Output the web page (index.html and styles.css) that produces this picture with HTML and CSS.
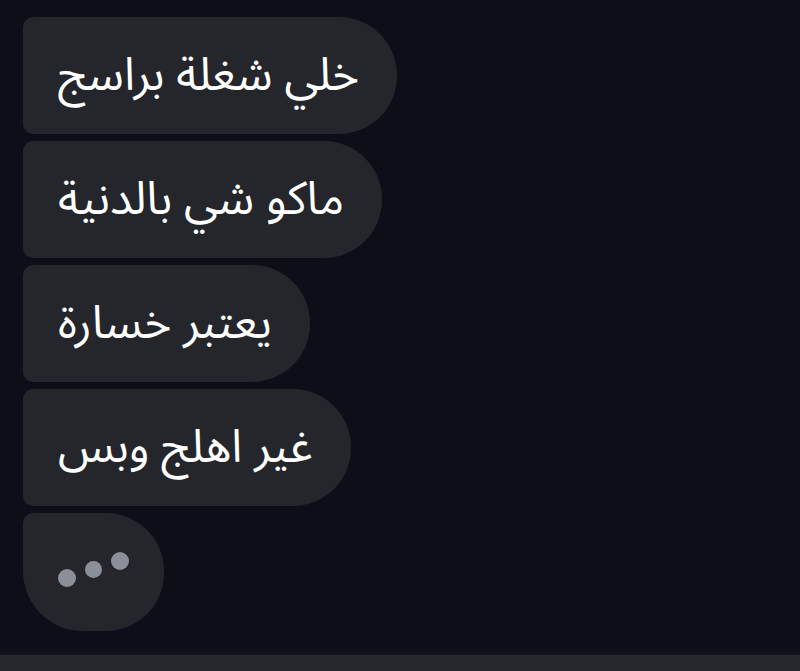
FILE: index.html
```html
<!DOCTYPE html>
<html lang="ar">
<head>
    <meta charset="UTF-8">
    <meta name="viewport" content="width=device-width, initial-scale=1.0">
    <title>المحادثة</title>
    <link rel="stylesheet" href="styles.css">
</head>
<body>
    <div class="chat">
        <!-- رسائل -->
        <div class="bubble" dir="rtl">خلي شغلة براسج</div>
        <div class="bubble" dir="rtl">ماكو شي بالدنية</div>
        <div class="bubble" dir="rtl">يعتبر خسارة</div>
        <div class="bubble" dir="rtl">غير اهلج وبس</div>

        <!-- يكتب الآن -->
        <div class="typing">
            <span class="dot dot1"></span>
            <span class="dot dot2"></span>
            <span class="dot dot3"></span>
        </div>
    </div>

    <div class="composer"></div>
</body>
</html>
```

FILE: styles.css
```css
/* Reset geral */
* {
    margin: 0;
    padding: 0;
    box-sizing: border-box;
}

body {
    font-family: "Noto Sans Arabic", "Noto Sans", "DejaVu Sans", sans-serif;
    background-color: #0c0f17;
    color: #fff;
    height: 100vh;
    display: flex;
    flex-direction: column;
    overflow: hidden;
}

/* Lista de mensagens */
.chat {
    flex: 1;
    display: flex;
    flex-direction: column;
    align-items: flex-start;
    gap: 7px;
    padding: 17px 0 0 23px;
}

.bubble {
    height: 117px;
    display: flex;
    align-items: center;
    padding: 0 38px 0 35px;
    background-color: #24262b;
    border-radius: 10px 58px 58px 10px;
    font-size: 46px;
    line-height: 1;
    white-space: nowrap;
}

/* Balão "digitando" */
.typing {
    width: 141px;
    height: 118px;
    background-color: #24262b;
    border-radius: 10px 58px 58px 60px;
    display: flex;
    align-items: flex-start;
    padding: 37px 0 0 35px;
    gap: 9px;
}

.dot {
    width: 18px;
    height: 18px;
    border-radius: 50%;
    background-color: #8b8f98;
}

.dot1 { margin-top: 19px; }
.dot2 { margin-top: 11px; width: 17px; height: 17px; }
.dot3 { margin-top: 2px; }

/* Barra inferior */
.composer {
    height: 21px;
    border-top: 5px solid #0f121a;
    background-color: #25282c;
}
```
